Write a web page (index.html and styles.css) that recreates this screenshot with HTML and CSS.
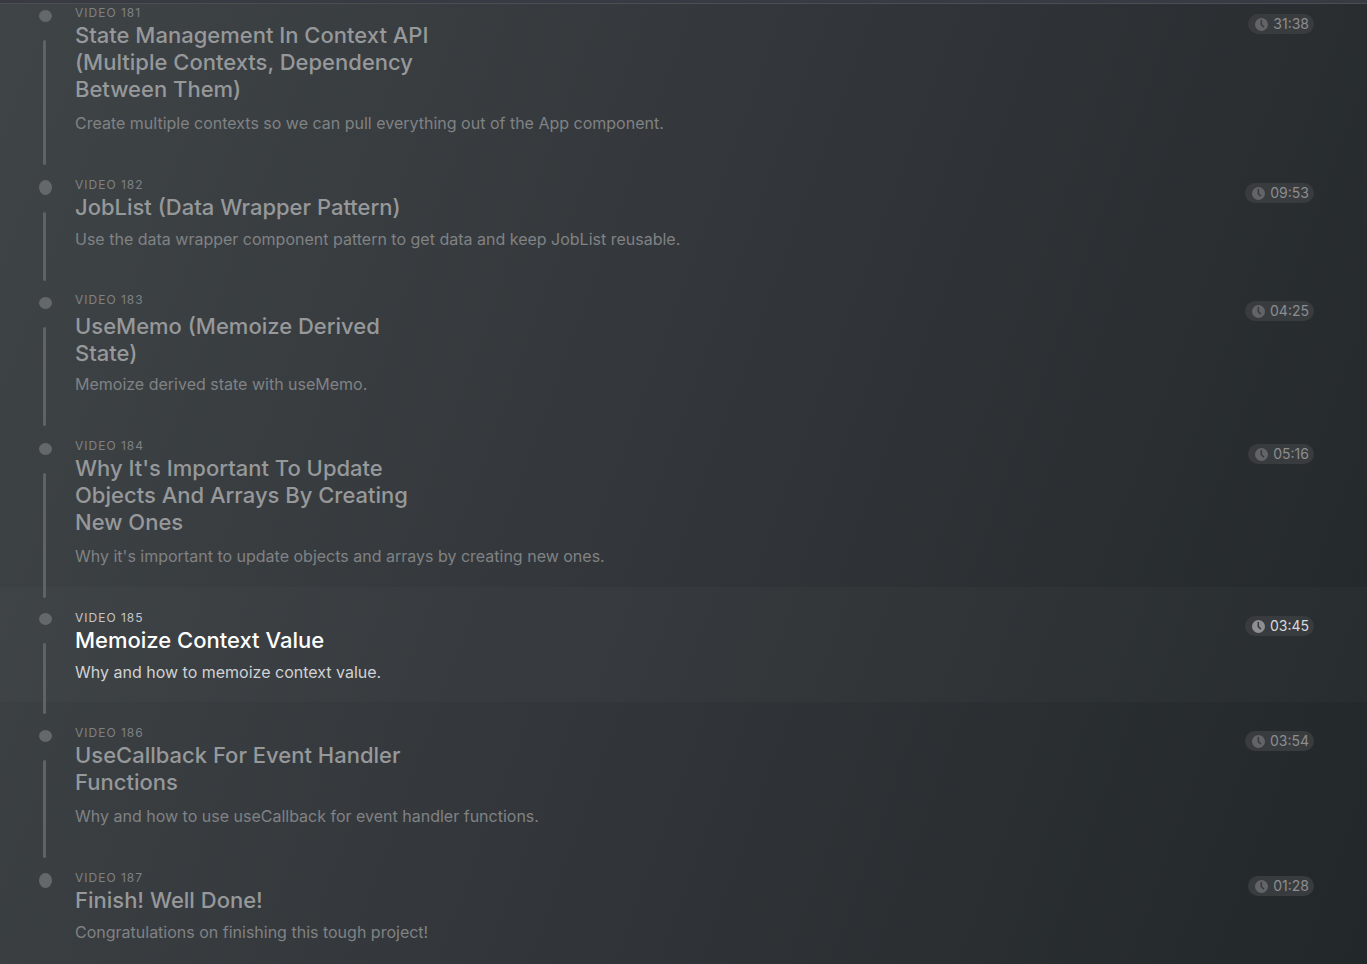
FILE: index.html
```
<!DOCTYPE html>
<html lang="en">
<head>
    <title>Course Videos</title>
    <meta charset="utf-8">
    <meta name="viewport" content="width=device-width, initial-scale=1">
    <link rel="stylesheet" href="styles.css">
</head>
<body>
    <svg class="sprite" aria-hidden="true">
        <symbol id="clock" viewBox="0 0 20 20">
            <path fill-rule="evenodd" clip-rule="evenodd" d="M10 0a10 10 0 1 0 0 20 10 10 0 0 0 0-20zM8.500 4a1.200 1.200 0 0 1 2.400 0v5.600l3 3a1.200 1.200 0 0 1-1.700 1.700L9 11.200a1.800 1.800 0 0 1-.5-1.200z"/>
        </symbol>
    </svg>

    <main class="videos">
        <ol class="video-list">
            <li class="video badge-low">
                <div class="timeline"><span class="dot"></span><span class="line"></span></div>
                <div class="info">
                    <p class="number">Video 181</p>
                    <h2 class="title">State Management In Context API (Multiple Contexts, Dependency Between Them)</h2>
                    <p class="description">Create multiple contexts so we can pull everything out of the App component.</p>
                </div>
                <div class="duration"><svg class="clock"><use href="#clock"/></svg>31:38</div>
            </li>
            <li class="video single">
                <div class="timeline"><span class="dot tall"></span><span class="line"></span></div>
                <div class="info">
                    <p class="number">Video 182</p>
                    <h2 class="title">JobList (Data Wrapper Pattern)</h2>
                    <p class="description">Use the data wrapper component pattern to get data and keep JobList reusable.</p>
                </div>
                <div class="duration"><svg class="clock"><use href="#clock"/></svg>09:53</div>
            </li>
            <li class="video badge-low title-low">
                <div class="timeline"><span class="dot"></span><span class="line"></span></div>
                <div class="info">
                    <p class="number">Video 183</p>
                    <h2 class="title">UseMemo (Memoize Derived State)</h2>
                    <p class="description">Memoize derived state with useMemo.</p>
                </div>
                <div class="duration"><svg class="clock"><use href="#clock"/></svg>04:25</div>
            </li>
            <li class="video">
                <div class="timeline"><span class="dot"></span><span class="line"></span></div>
                <div class="info">
                    <p class="number">Video 184</p>
                    <h2 class="title">Why It's Important To Update Objects And Arrays By Creating New Ones</h2>
                    <p class="description">Why it's important to update objects and arrays by creating new ones.</p>
                </div>
                <div class="duration"><svg class="clock"><use href="#clock"/></svg>05:16</div>
            </li>
            <li class="video single active">
                <div class="timeline"><span class="dot"></span><span class="line"></span></div>
                <div class="info">
                    <p class="number">Video 185</p>
                    <h2 class="title">Memoize Context Value</h2>
                    <p class="description">Why and how to memoize context value.</p>
                </div>
                <div class="duration"><svg class="clock"><use href="#clock"/></svg>03:45</div>
            </li>
            <li class="video">
                <div class="timeline"><span class="dot"></span><span class="line"></span></div>
                <div class="info">
                    <p class="number">Video 186</p>
                    <h2 class="title">UseCallback For Event Handler Functions</h2>
                    <p class="description">Why and how to use useCallback for event handler functions.</p>
                </div>
                <div class="duration"><svg class="clock"><use href="#clock"/></svg>03:54</div>
            </li>
            <li class="video single">
                <div class="timeline"><span class="dot tall"></span></div>
                <div class="info">
                    <p class="number">Video 187</p>
                    <h2 class="title">Finish! Well Done!</h2>
                    <p class="description">Congratulations on finishing this tough project!</p>
                </div>
                <div class="duration"><svg class="clock"><use href="#clock"/></svg>01:28</div>
            </li>
        </ol>
    </main>
</body>
</html>
```
FILE: styles.css
```
* {
    box-sizing: border-box;
    margin: 0;
    padding: 0;
}

body {
    background: #383b43;
    color: #96989a;
    font-family: Inter, "Liberation Sans", sans-serif;
    padding-top: 3px;
}

.sprite {
    display: none;
}

.videos {
    background: linear-gradient(110deg, #3f4447, #32363a 50%, #22272a);
    border-top: 1px solid #4b4e51;
}

.video-list {
    list-style: none;
}

.video {
    display: flex;
    align-items: stretch;
    padding: 22px 53px 19px 39px;
}

.video.single {
    padding-bottom: 18px;
}

.video:first-child {
    padding-top: 0;
}

.video:last-child {
    padding-bottom: 20px;
}

.video.active {
    background: rgba(255, 255, 255, 0.02);
}

.timeline {
    display: flex;
    flex-direction: column;
    width: 36px;
}

.dot {
    width: 13px;
    height: 12px;
    margin-top: 6px;
    border-radius: 50%;
    background: #64686a;
}

.dot.tall {
    height: 15px;
    margin-top: 4px;
}

/* runs on into the padding of the next video */
.line {
    position: relative;
    flex: 1;
    width: 3px;
    margin: 18px 0 -30px 4px;
    border-radius: 2px;
    background: #5f6365;
}

.dot.tall + .line {
    margin-top: 17px;
}

.active .dot {
    margin-top: 4px;
}

.info {
    flex: 1;
}

.number {
    color: #7f8183;
    font-size: 12px;
    letter-spacing: 1px;
    line-height: 18px;
    text-transform: uppercase;
}

.title {
    max-width: 370px;
    font-size: 22px;
    font-weight: 500;
    line-height: 27px;
    margin-bottom: 8px;
}

.single .title {
    margin-bottom: 6px;
}

.title-low .title {
    margin: 4px 0 5px;
}

.description {
    color: #808284;
    font-size: 16px;
    line-height: 24px;
}

.duration {
    display: flex;
    align-items: center;
    align-self: flex-start;
    gap: 5px;
    height: 20px;
    margin-top: 7px;
    padding: 0 5px 0 7px;
    border-radius: 10px;
    background: #393c3f;
    color: #8b8d8f;
    font-size: 14px;
    line-height: 20px;
}

.badge-low .duration {
    margin-top: 10px;
}

.clock {
    width: 13px;
    height: 13px;
    fill: #626467;
}

.active .number {
    color: #c4c6c7;
}

.active .title {
    color: #fff;
}

.active .description {
    color: #d0d2d3;
}

.active .duration {
    color: #d8d9da;
}

.active .clock {
    fill: #8d8f91;
}
```
